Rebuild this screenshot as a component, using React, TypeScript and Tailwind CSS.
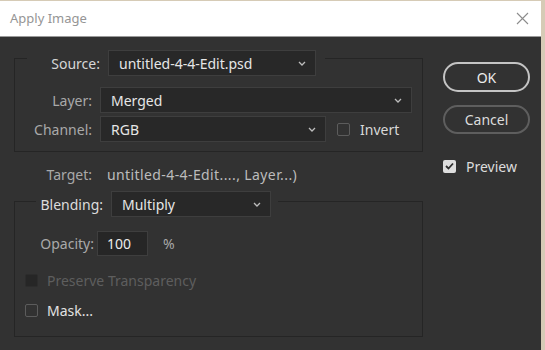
import React from 'react';

const font = { fontFamily: '"Noto Sans", "Open Sans", sans-serif' };

const Chevron = () => (
  <svg width="8" height="5" viewBox="0 0 8 5" className="shrink-0">
    <path d="M1 1 L4 4 L7 1" fill="none" stroke="#bdbdbd" strokeWidth="1.3" />
  </svg>
);

const Dropdown = ({ value, width }: { value: string; width: string }) => (
  <div
    className={`${width} h-[26px] flex items-center justify-between pl-[10px] pr-[9px] bg-[#282828] border border-[#3e3e3e] text-[#e6e6e6]`}
  >
    <span>{value}</span>
    <Chevron />
  </div>
);

const Check = ({ state }: { state: 'off' | 'on' | 'disabled' }) => {
  if (state === 'on')
    return (
      <div className="w-[13px] h-[13px] rounded-[2px] bg-[#dedede] flex items-center justify-center shrink-0">
        <svg width="9" height="8" viewBox="0 0 9 8">
          <path d="M1 4 L3.5 6.5 L8 1.5" fill="none" stroke="#2e2e2e" strokeWidth="1.8" />
        </svg>
      </div>
    );
  if (state === 'disabled')
    return <div className="w-[13px] h-[13px] rounded-[2px] bg-[#262626] border border-[#2c2c2c] shrink-0" />;
  return <div className="w-[13px] h-[13px] rounded-[2px] border-[1.5px] border-[#5c5c5c] shrink-0" />;
};

export default function App() {
  return (
    <div className="w-[545px] h-[350px] bg-[#d6cbb6] pt-[1px] pr-[4px] overflow-hidden text-[14px]" style={font}>
      <div className="h-full flex flex-col bg-[#323232]">
        {/* title bar */}
        <div className="h-[36px] bg-white border-b border-[#9a9a9a] flex items-center justify-between pl-[10px] pr-[12px]">
          <span className="text-[#959595] text-[13px]">Apply Image</span>
          <svg width="13" height="13" viewBox="0 0 13 13">
            <path d="M1 1 L12 12 M12 1 L1 12" stroke="#8c8c8c" strokeWidth="1.1" />
          </svg>
        </div>

        <div className="flex">
          {/* left column */}
          <div className="ml-[14px] w-[409px] flex flex-col">
            <fieldset className="mt-[13px] border border-[#252525] pb-[9px]">
              <legend className="ml-[12px] h-[16px]">
                <div className="flex items-center h-[26px] pl-[13px] pr-[9px]">
                  <span className="w-[60px] text-right text-[#d6d6d6]">Source:</span>
                  <div className="ml-[8px]">
                    <Dropdown value="untitled-4-4-Edit.psd" width="w-[208px]" />
                  </div>
                </div>
              </legend>
              <div className="mt-[21px] flex items-center">
                <span className="w-[77px] text-right text-[#a9a9a9]">Layer:</span>
                <div className="ml-[8px]">
                  <Dropdown value="Merged" width="w-[312px]" />
                </div>
              </div>
              <div className="mt-[3px] flex items-center">
                <span className="w-[77px] text-right text-[#a9a9a9]">Channel:</span>
                <div className="ml-[8px]">
                  <Dropdown value="RGB" width="w-[226px]" />
                </div>
                <div className="ml-[11px]">
                  <Check state="off" />
                </div>
                <span className="ml-[10px] text-[#d8d8d8]">Invert</span>
              </div>
            </fieldset>

            <div className="mt-[12px] h-[20px] flex items-center">
              <span className="w-[78px] text-right text-[#a9a9a9]">Target:</span>
              <span className="ml-[15px] text-[#bcbcbc] tracking-[0.4px]">untitled-4-4-Edit...., Layer...)</span>
            </div>

            <fieldset className="mt-[7px] border border-[#252525] pb-[16px]">
              <legend className="ml-[21px] h-[20px]">
                <div className="flex items-center h-[26px] pl-[4px] pr-[7px]">
                  <span className="w-[63px] text-right text-[#dcdcdc]">Blending:</span>
                  <div className="ml-[8px]">
                    <Dropdown value="Multiply" width="w-[160px]" />
                  </div>
                </div>
              </legend>
              <div className="mt-[20px] flex items-center">
                <span className="w-[79px] text-right text-[#a9a9a9]">Opacity:</span>
                <div className="ml-[3px] w-[51px] h-[25px] flex items-center pl-[9px] bg-[#262626] border border-[#3e3e3e] text-[#ececec]">
                  100
                </div>
                <span className="ml-[15px] text-[#a9a9a9]">%</span>
              </div>
              <div className="mt-[14px] h-[20px] flex items-center pl-[10px]">
                <Check state="disabled" />
                <span className="ml-[9px] text-[#5e5e5e]">Preserve Transparency</span>
              </div>
              <div className="mt-[10px] h-[20px] flex items-center pl-[10px]">
                <Check state="off" />
                <span className="ml-[9px] text-[#e2e2e2]">Mask...</span>
              </div>
            </fieldset>
          </div>

          {/* right column */}
          <div className="ml-[20px] flex flex-col">
            <button className="mt-[25px] w-[87px] h-[30px] rounded-full border-2 border-[#c4c4c4] text-[#ececec] flex items-center justify-center">
              OK
            </button>
            <button className="mt-[13px] w-[87px] h-[29px] rounded-full border-2 border-[#5e5e5e] text-[#dcdcdc] flex items-center justify-center">
              Cancel
            </button>
            <div className="mt-[22px] h-[20px] flex items-center">
              <Check state="on" />
              <span className="ml-[10px] text-[#dcdcdc]">Preview</span>
            </div>
          </div>
        </div>
      </div>
    </div>
  );
}
